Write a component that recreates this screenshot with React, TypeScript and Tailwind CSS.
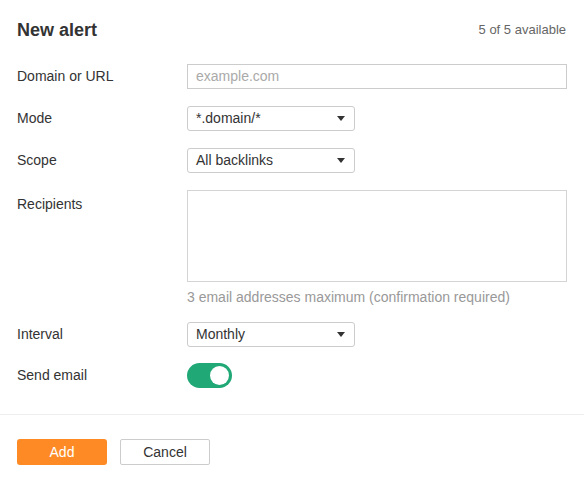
import React from "react";

function Select({ value }: { value: string }) {
  return (
    <div className="flex h-[25px] w-[168px] items-center justify-between rounded-[3px] border border-[#cccccc] bg-white pl-[8px] pr-[8px] text-[14px] text-[#333333]">
      <span>{value}</span>
      <svg width="8" height="5" viewBox="0 0 8 5" className="mr-[1px]">
        <path d="M0 0 H8 L4 5 Z" fill="#333333" />
      </svg>
    </div>
  );
}

function Label({ children, className = "" }: { children: React.ReactNode; className?: string }) {
  return (
    <div className={"w-[170px] shrink-0 text-[14px] text-[#333333] " + className}>{children}</div>
  );
}

export default function App() {
  return (
    <div
      className="h-[482px] w-[585px] bg-white"
      style={{ fontFamily: '"Liberation Sans", Arial, sans-serif' }}
    >
      <div className="px-[17px] pt-[19px]">
        <div className="flex items-center justify-between pr-[2px]">
          <h1 className="text-[18px] font-bold leading-[22px] text-[#333333]">New alert</h1>
          <span className="text-[13px] text-[#666666]">5 of 5 available</span>
        </div>

        <div className="mt-[23px] flex items-center">
          <Label>Domain or URL</Label>
          <div className="flex h-[25px] w-[380px] items-center border border-[#cccccc] pl-[8px] text-[14px] text-[#aaaaaa]">
            example.com
          </div>
        </div>

        <div className="mt-[17px] flex items-center">
          <Label>Mode</Label>
          <Select value="*.domain/*" />
        </div>

        <div className="mt-[17px] flex items-center">
          <Label>Scope</Label>
          <Select value="All backlinks" />
        </div>

        <div className="mt-[17px] flex items-start">
          <Label className="pt-[4px]">Recipients</Label>
          <div>
            <div className="h-[92px] w-[380px] border border-[#d4d4d4]" />
            <div className="mt-[7px] text-[14px] leading-[17px] text-[#999999]">
              3 email addresses maximum (confirmation required)
            </div>
          </div>
        </div>

        <div className="mt-[16px] flex items-center">
          <Label>Interval</Label>
          <Select value="Monthly" />
        </div>

        <div className="mt-[16px] flex items-center">
          <Label>Send email</Label>
          <div className="flex h-[25px] w-[45px] items-center justify-end rounded-full bg-[#21a877] pr-[3px]">
            <div className="h-[19px] w-[19px] rounded-full bg-white" />
          </div>
        </div>
      </div>

      <div className="mt-[26px] h-px w-[584px] bg-[#eeeeee]" />

      <div className="flex gap-[13px] px-[17px] pt-[24px]">
        <button className="flex h-[26px] w-[90px] items-center justify-center rounded-[3px] bg-[#fd8a25] text-[14px] text-white">
          Add
        </button>
        <button className="flex h-[26px] w-[90px] items-center justify-center rounded-[2px] border border-[#cccccc] bg-white text-[14px] text-[#333333]">
          Cancel
        </button>
      </div>
    </div>
  );
}
